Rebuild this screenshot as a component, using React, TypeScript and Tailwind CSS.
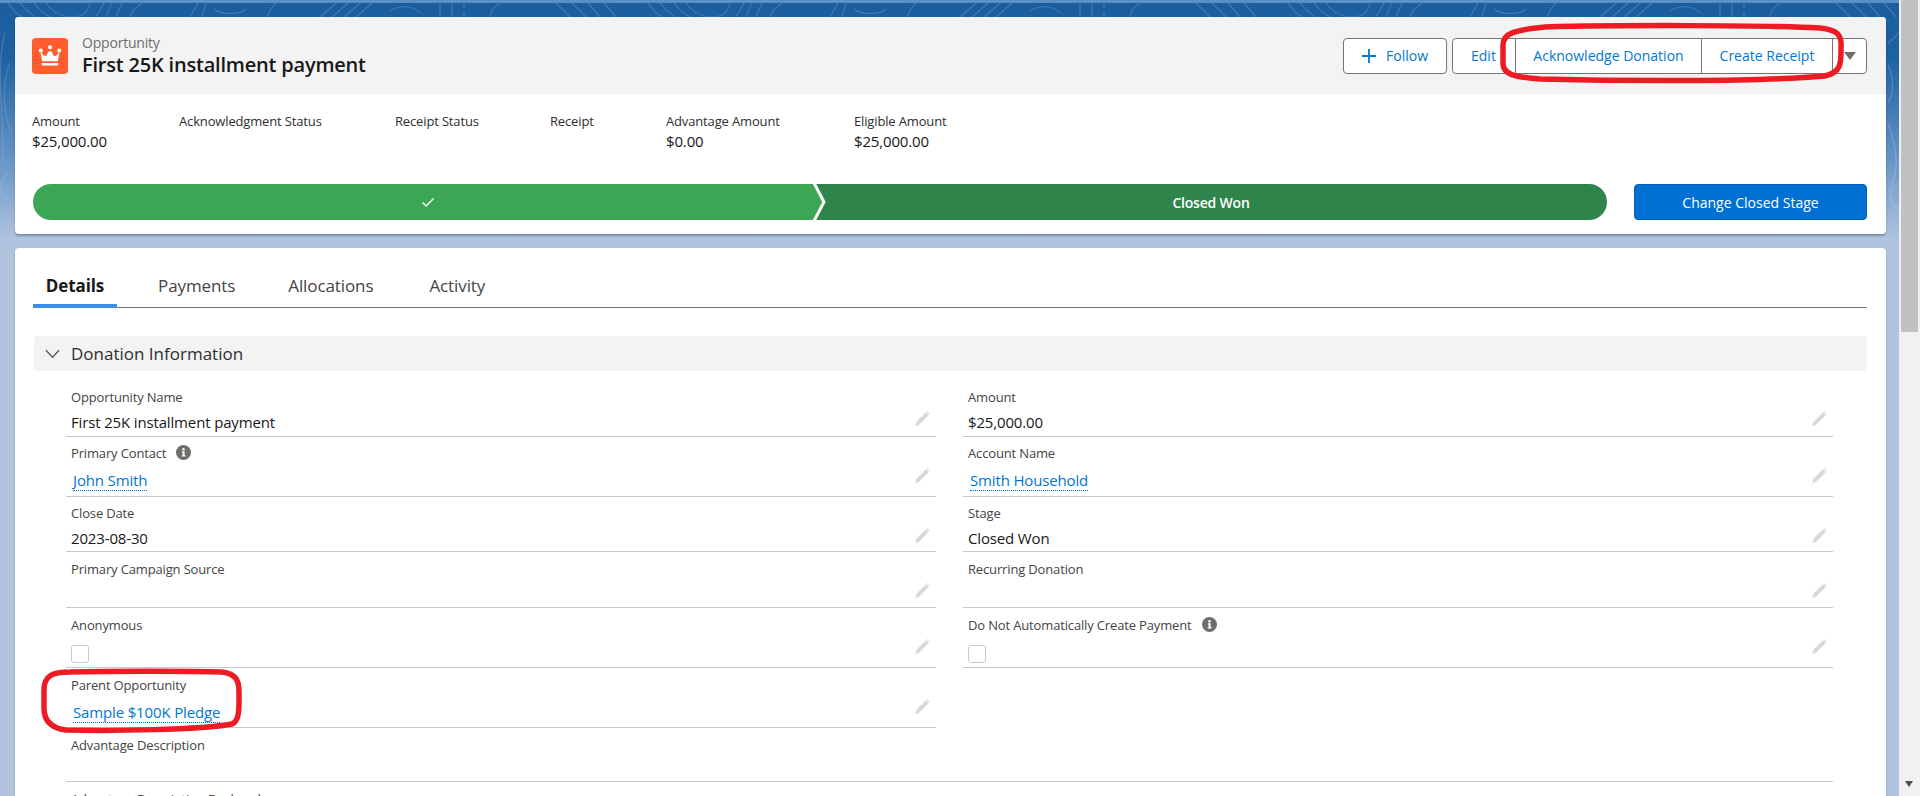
const fields = [
  [
    { label: "Opportunity Name", value: "First 25K installment payment" },
    { label: "Amount", value: "$25,000.00" },
    "h-[57px]",
    "pt-[8px]",
  ],
  [
    { label: "Primary Contact", value: "John Smith", link: true, info: true },
    { label: "Account Name", value: "Smith Household", link: true },
    "h-[60px]",
    "pt-[7px]",
  ],
  [
    { label: "Close Date", value: "2023-08-30" },
    { label: "Stage", value: "Closed Won" },
    "h-[55px]",
    "pt-[7px]",
  ],
  [
    { label: "Primary Campaign Source", value: "" },
    { label: "Recurring Donation", value: "" },
    "h-[56px]",
    "pt-[8px]",
  ],
  [
    { label: "Anonymous", check: true },
    { label: "Do Not Automatically Create Payment", check: true, info: true },
    "h-[60px]",
    "pt-[8px]",
  ],
] as const;

const stats = [
  { label: "Amount", value: "$25,000.00", w: "w-[147px]" },
  { label: "Acknowledgment Status", value: "", w: "w-[216px]" },
  { label: "Receipt Status", value: "", w: "w-[155px]" },
  { label: "Receipt", value: "", w: "w-[116px]" },
  { label: "Advantage Amount", value: "$0.00", w: "w-[188px]" },
  { label: "Eligible Amount", value: "$25,000.00", w: "w-[150px]" },
];

function Pencil() {
  return (
    <svg viewBox="0 0 16 16" className="w-[18px] h-[18px] shrink-0 mt-[30px] mr-[5px]">
      <path d="M2 14.5 L3 10.5 L11.5 2 L14 4.5 L5.5 13 Z" fill="#d8d8d8" />
      <path d="M12.3 1.2 L14.8 3.7" stroke="#e6e6e6" strokeWidth="1.4" />
    </svg>
  );
}

function Info() {
  return (
    <svg viewBox="0 0 15 15" className="w-[15px] h-[15px] ml-[10px] -mt-[2px] shrink-0">
      <circle cx="7.5" cy="7.5" r="7.5" fill="#706e6b" />
      <circle cx="7.5" cy="4.2" r="1.2" fill="#fff" />
      <path d="M5.9 6.3 H8.6 V10.3 H9.5 V11.6 H5.7 V10.3 H6.6 V7.6 H5.9 Z" fill="#fff" />
    </svg>
  );
}

type FieldProps = {
  label: string;
  value?: string;
  link?: boolean;
  info?: boolean;
  check?: boolean;
  height: string;
  top?: string;
};

function Field({ label, value, link, info, check, height, top = "pt-[8px]" }: FieldProps) {
  return (
    <div className={`flex border-b border-[#c9c9c9] ${height}`}>
      <div className={`flex-1 pl-[5px] ${top}`}>
        <div className="flex items-center h-[18px] text-[13px] leading-[18px] text-[#444444] tracking-[-0.15px]">
          {label}
          {info && <Info />}
        </div>
        {check ? (
          <div className="mt-[11px] w-[18px] h-[18px] rounded-[3px] border border-[#c9c9c9] bg-white" />
        ) : link ? (
          <div className="mt-[8px] h-[20px] pl-[2px] text-[15px] leading-[20px]">
            <span className="text-[#0176d3] border-b border-dotted border-[#0176d3] tracking-[-0.15px]">{value}</span>
          </div>
        ) : (
          <div className="mt-[6px] h-[20px] text-[15px] leading-[20px] text-[#181818] tracking-[-0.15px]">{value}</div>
        )}
      </div>
      <Pencil />
    </div>
  );
}

function Contours() {
  return (
    <svg className="absolute left-0 top-[3px] w-full h-[250px]" width="1899" height="250">
      <defs>
        <pattern id="lines" width="640" height="250" patternUnits="userSpaceOnUse">
          <g fill="none" stroke="#ffffff" strokeOpacity="0.16" strokeWidth="1.2">
            <path d="M8 0 C12 6 18 12 22 14 M20 0 C26 6 30 12 36 14 M34 0 C40 8 46 12 50 14 M46 0 C52 8 60 14 72 14 C84 14 88 8 90 0" />
            <path d="M96 14 L104 0 M106 14 L112 0 M116 14 L122 0 M130 14 C132 8 136 4 142 0" />
            <path d="M190 14 L198 0 M202 14 L206 0 M214 6 C220 12 240 12 246 6 M268 14 C268 8 272 4 276 0" />
            <path d="M320 14 L336 0 M332 14 L348 0 M344 14 L360 0 M356 14 L372 0 M390 8 C400 2 412 2 420 10" />
            <path d="M440 0 V14 M452 0 V14 M464 0 V5 M464 9 V14 M490 14 C490 8 494 4 500 0" />
            <path d="M556 0 L570 14 M572 0 L586 14 M588 0 L600 14 M604 0 L616 14" />
            <path d="M5 30 C-6 70 6 120 2 160 M10 60 C2 80 2 110 12 130" />
            <path d="M8 170 C-2 180 -2 190 8 196 M2 206 C10 210 12 220 4 230" />
            <path d="M628 30 C640 60 632 100 638 140" />
          </g>
        </pattern>
        <linearGradient id="fade" x1="0" y1="0" x2="0" y2="1">
          <stop offset="0" stopColor="#fff" />
          <stop offset="0.75" stopColor="#fff" stopOpacity="0.7" />
          <stop offset="1" stopColor="#fff" stopOpacity="0" />
        </linearGradient>
        <mask id="fadeMask">
          <rect width="1899" height="250" fill="url(#fade)" />
        </mask>
      </defs>
      <rect width="1899" height="250" fill="url(#lines)" mask="url(#fadeMask)" />
      <g fill="none" stroke="#ffffff" strokeOpacity="0.18" strokeWidth="1.2">
        <path d="M1888 40 C1896 34 1899 30 1899 28 M1888 62 C1894 75 1894 90 1888 100 M1888 120 C1899 150 1899 170 1888 190" />
        <path d="M1899 180 C1888 186 1888 200 1899 206" />
      </g>
    </svg>
  );
}

function Crown() {
  return (
    <div className="w-[36px] h-[36px] rounded-[4px] bg-[#ff5d2d] shrink-0">
      <svg viewBox="0 0 36 36" className="w-[36px] h-[36px]">
        <g fill="#ffffff">
          <circle cx="8.8" cy="12.4" r="2" />
          <circle cx="18" cy="9.2" r="2" />
          <circle cx="27.2" cy="12.4" r="2" />
          <path d="M9.7 14.4 C10.6 17.6 13 18.6 14.6 17.4 L16.6 13.2 H19.4 L21.4 17.4 C23 18.6 25.4 17.6 26.3 14.4 L27.4 14.8 L25.8 23.3 H10.2 L8.6 14.8 Z" />
          <rect x="9.8" y="25" width="16.4" height="2.4" rx="0.6" />
        </g>
      </svg>
    </div>
  );
}

function HeaderButtons() {
  return (
    <div className="flex items-center text-[14px] text-[#0176d3]">
      <button className="flex items-center justify-center w-[104px] h-[36px] rounded-[4px] border border-[#747474] bg-white">
        <svg viewBox="0 0 14 14" className="w-[14px] h-[14px] mr-[10px]">
          <path d="M7 0 V14 M0 7 H14" stroke="#0176d3" strokeWidth="1.8" fill="none" />
        </svg>
        Follow
      </button>
      <div className="flex ml-[5px] h-[36px] rounded-[4px] border border-[#747474] bg-white">
        <button className="w-[62px] text-left pl-[18px]">Edit</button>
        <button className="w-[186px] border-l border-[#747474] text-center">Acknowledge Donation</button>
        <button className="w-[131px] border-l border-[#747474] text-center">Create Receipt</button>
        <button className="w-[34px] border-l border-[#747474] flex items-center justify-center">
          <svg viewBox="0 0 12 8" className="w-[12px] h-[8px]">
            <path d="M0 0 H12 L6 8 Z" fill="#706e6b" />
          </svg>
        </button>
      </div>
    </div>
  );
}

export default function App() {
  return (
    <div className="flex h-[796px] overflow-hidden bg-white font-['Open_Sans',sans-serif]">
      <main className="relative flex-1 min-w-0 overflow-hidden bg-[linear-gradient(180deg,#5b90c6_0px,#5b90c6_3px,#1b5e9f_3px,#1f62a3_60px,#6f9aca_170px,#b0c4df_240px,#b0c4df_796px)] pt-[17px] pl-[15px] pr-[13px]">
        <Contours />

        {/* highlight card */}
        <section className="relative rounded-[4px] bg-white overflow-hidden shadow-[0_2px_2px_rgba(0,0,0,0.25)] h-[217px]">
          <div className="flex items-center justify-between h-[77px] bg-[#f3f3f3] pl-[17px] pr-[19px]">
            <div className="flex items-center">
              <Crown />
              <div className="ml-[14px] -mt-[1px]">
                <div className="text-[14px] leading-[18px] text-[#706e6b] tracking-[-0.2px]">Opportunity</div>
                <div className="text-[20px] leading-[25px] font-semibold text-[#181818] tracking-[-0.2px]">
                  First 25K installment payment
                </div>
              </div>
            </div>
            <HeaderButtons />
          </div>

          <div className="flex pl-[17px] pt-[17px] h-[90px] text-[13px] leading-[21px] text-[#2e2e2e] tracking-[-0.15px]">
            {stats.map((s) => (
              <div key={s.label} className={s.w}>
                <div>{s.label}</div>
                <div className="text-[15px] leading-[19px] text-[#181818]">{s.value}</div>
              </div>
            ))}
          </div>

          <div className="flex pl-[18px] pr-[19px] h-[36px]">
            <div className="flex flex-1 rounded-full overflow-hidden text-white text-[14px] tracking-[-0.2px]">
              <div className="w-[780px] bg-[#3ba755] flex items-center justify-center pl-[10px]">
                <svg viewBox="0 0 14 14" className="w-[14px] h-[14px]">
                  <path d="M1.5 7.5 L5.2 11 L12.5 3.5" stroke="#fff" strokeWidth="1.5" fill="none" />
                </svg>
              </div>
              <svg viewBox="0 0 14 36" className="w-[14px] h-[36px] shrink-0 bg-[#2e844a]">
                <path d="M0 0 H2 L11 18 L2 36 H0 Z" fill="#3ba755" />
                <path d="M1 -1 L11 18 L1 37" stroke="#fff" strokeWidth="3" fill="none" />
              </svg>
              <div className="flex-1 bg-[#2e844a] flex items-center justify-center font-semibold pr-[12px]">Closed Won</div>
            </div>
            <button className="ml-[27px] w-[233px] rounded-[4px] bg-[#0070d2] border border-[#0060b4] text-white text-[14px] font-medium">
              Change Closed Stage
            </button>
          </div>
        </section>

        {/* details card */}
        <section className="relative mt-[14px] h-[600px] rounded-[4px] bg-white shadow-[0_2px_2px_rgba(0,0,0,0.25)] pl-[18px] pr-[19px]">
          <div className="flex h-[60px] pt-[26px] border-b-[1.5px] border-[#747474] text-[17px] leading-[24px] text-[#444444] tracking-[-0.1px]">
            <div className="relative w-[84px] text-center font-bold text-[#181818]">
              Details
              <div className="absolute left-0 right-0 top-[30px] h-[4px] bg-[#3d8fec]" />
            </div>
            <div className="ml-[41px]">Payments</div>
            <div className="ml-[53px]">Allocations</div>
            <div className="ml-[56px]">Activity</div>
          </div>

          <div className="flex items-center mt-[28px] ml-[1px] h-[35px] rounded-[4px] bg-[#f3f3f3] text-[17px] text-[#2e2e2e] pl-[11px]">
            <svg viewBox="0 0 16 10" className="w-[15px] h-[10px] mr-[11px]">
              <path d="M1 1 L8 8.5 L15 1" stroke="#5c5c5c" strokeWidth="1.5" fill="none" />
            </svg>
            Donation Information
          </div>

          <div className="mt-[9px] ml-[33px] mr-[34px]">
            <div className="grid grid-cols-2 gap-x-[27px]">
              {fields.map(([left, right, height, top]) => (
                <div key={left.label} className="contents">
                  <Field {...left} height={height} top={top} />
                  <Field {...right} height={height} top={top} />
                </div>
              ))}
              <Field label="Parent Opportunity" value="Sample $100K Pledge" link height="h-[60px]" />
              <div />
            </div>
            <div className="h-[54px] border-b border-[#c9c9c9] pt-[8px] pl-[5px] text-[13px] leading-[18px] text-[#444444] tracking-[-0.15px]">
              Advantage Description
            </div>
            <div className="pt-[8px] pl-[5px] text-[13px] leading-[18px] text-[#444444] tracking-[-0.15px]">
              Advantage Description Declared
            </div>
          </div>
        </section>

        {/* red annotations drawn over the screenshot */}
        <svg className="absolute left-0 top-0 pointer-events-none" width="1899" height="796">
          <g fill="none" stroke="#ed1c24" strokeWidth="5.5">
            <path d="M1503 45 C1503 33 1515 30 1545 27 C1620 25 1760 25 1820 28 C1838 30 1842 35 1841 48 C1841 62 1842 72 1825 76 C1760 82 1620 81 1540 79 C1515 77 1502 75 1503 62 Z" />
            <path d="M44 690 C44 676 52 672 70 672 C110 671 190 671 222 672 C236 674 239 680 239 692 C239 708 240 720 232 724 C200 730 110 731 66 730 C50 728 44 720 44 708 Z" />
          </g>
        </svg>
      </main>

      {/* browser scrollbar */}
      <div className="relative w-[21px] shrink-0 bg-[#f1f1f1] px-[2px]">
        <div className="h-[332px] bg-[#c1c1c1]" />
        <svg viewBox="0 0 8 6" className="absolute left-[6px] top-[781px] w-[8px] h-[6px]">
          <path d="M0 0 H8 L4 6 Z" fill="#505050" />
        </svg>
      </div>
    </div>
  );
}
